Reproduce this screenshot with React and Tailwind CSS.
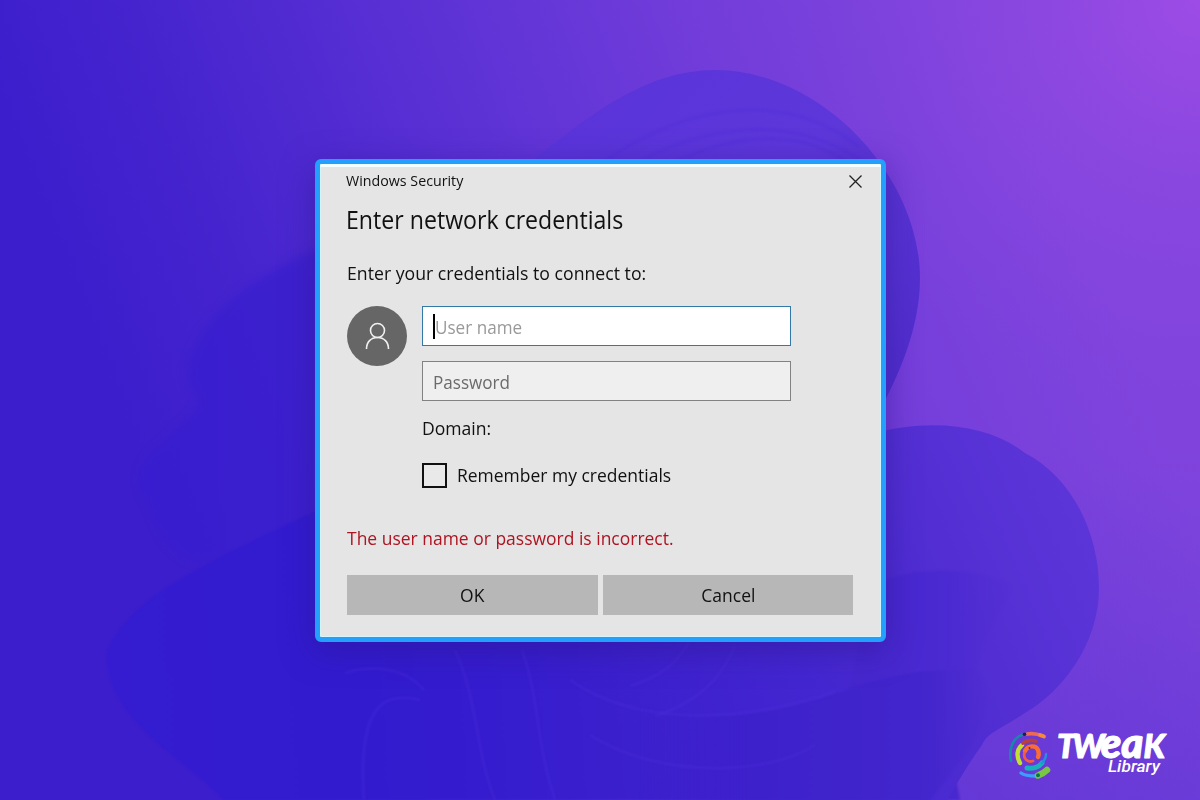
import { useState } from 'react';

const Wallpaper = () => (
  <svg className="absolute inset-0 h-full w-full" viewBox="0 0 1200 800" preserveAspectRatio="none" aria-hidden="true">
    <defs>
      <linearGradient id="base" x1="150" y1="500" x2="1050" y2="150" gradientUnits="userSpaceOnUse">
        <stop offset="0" stopColor="#3c1ecc" />
        <stop offset="0.17" stopColor="#4524ce" />
        <stop offset="0.5" stopColor="#6034d6" />
        <stop offset="0.72" stopColor="#733dda" />
        <stop offset="1" stopColor="#8044dd" />
      </linearGradient>
      <radialGradient id="glow" cx="1200" cy="0" r="420" gradientUnits="userSpaceOnUse">
        <stop offset="0" stopColor="#a14de7" stopOpacity="0.9" />
        <stop offset="1" stopColor="#8245dd" stopOpacity="0" />
      </radialGradient>
      <linearGradient id="dusk" x1="0" y1="450" x2="0" y2="800" gradientUnits="userSpaceOnUse">
        <stop offset="0" stopColor="#5a35d4" stopOpacity="0" />
        <stop offset="1" stopColor="#5a35d4" stopOpacity="0.5" />
      </linearGradient>
      <linearGradient id="bloomTop" x1="560" y1="80" x2="920" y2="400" gradientUnits="userSpaceOnUse">
        <stop offset="0" stopColor="#5934d9" />
        <stop offset="0.5" stopColor="#5e37d9" />
        <stop offset="1" stopColor="#4f2ccb" />
      </linearGradient>
      <linearGradient id="bloomLeft" x1="110" y1="600" x2="900" y2="560" gradientUnits="userSpaceOnUse">
        <stop offset="0" stopColor="#351cd0" />
        <stop offset="0.3" stopColor="#321bcf" />
        <stop offset="0.5" stopColor="#361dce" />
        <stop offset="0.75" stopColor="#3f22cd" />
        <stop offset="1" stopColor="#4828cf" />
      </linearGradient>
      <linearGradient id="bloomRight" x1="600" y1="750" x2="1090" y2="540" gradientUnits="userSpaceOnUse">
        <stop offset="0" stopColor="#3c20cf" stopOpacity="0" />
        <stop offset="0.4" stopColor="#4326d0" />
        <stop offset="0.75" stopColor="#532fd3" />
        <stop offset="1" stopColor="#5c35d8" />
      </linearGradient>
      <linearGradient id="foldUpper" x1="860" y1="0" x2="1030" y2="0" gradientUnits="userSpaceOnUse">
        <stop offset="0" stopColor="#4627ce" />
        <stop offset="0.5" stopColor="#4b2ad2" />
        <stop offset="1" stopColor="#552fd4" stopOpacity="0" />
      </linearGradient>
      <linearGradient id="foldLower" x1="640" y1="0" x2="1000" y2="0" gradientUnits="userSpaceOnUse">
        <stop offset="0" stopColor="#3c20cc" stopOpacity="0" />
        <stop offset="0.3" stopColor="#3d21cb" />
        <stop offset="0.8" stopColor="#4326cc" />
        <stop offset="1" stopColor="#4e2bd1" stopOpacity="0" />
      </linearGradient>
      <linearGradient id="petal" x1="140" y1="0" x2="340" y2="0" gradientUnits="userSpaceOnUse">
        <stop offset="0" stopColor="#361dd0" />
        <stop offset="1" stopColor="#3a20cd" />
      </linearGradient>
      <filter id="soft" colorInterpolationFilters="sRGB">
        <feGaussianBlur stdDeviation="1.2" />
      </filter>
      <filter id="softer" x="-20%" y="-20%" width="140%" height="140%" colorInterpolationFilters="sRGB">
        <feGaussianBlur stdDeviation="4" />
      </filter>
    </defs>

    <rect width="1200" height="800" fill="url(#base)" />
    <rect width="1200" height="800" fill="url(#glow)" />
    <rect x="900" y="450" width="300" height="350" fill="url(#dusk)" />

    <path d="M510 178C580 124 638 70 716 70C822 71 920 176 920 278C920 331 896 380 880 410L520 430Z" fill="url(#bloomTop)" />
    <g fill="none" stroke="#4f2fdb" strokeOpacity="0.45" filter="url(#soft)" strokeWidth="2.5">
      <path d="M604 162C690 101 786 91 858 146" />
      <path d="M642 160C710 125 790 114 860 160" />
      <path d="M670 164C738 132 800 128 850 164" />
    </g>

    <path d="M340 240C230 280 180 340 190 385C205 405 198 408 170 435C137 465 133 480 150 505C160 540 178 560 202 563L340 540Z" fill="url(#petal)" fillOpacity="0.75" filter="url(#softer)" />
    <path d="M340 500C210 560 128 596 107 652C104 720 185 758 223 800L960 800L900 500Z" fill="url(#bloomLeft)" filter="url(#soft)" />

    <path d="M870 434C930 418 988 424 1025 453C1073 478 1099 534 1099 588C1099 646 1060 693 1025 713C1000 730 988 732 982 745C968 764 957 784 947 800L560 800L600 620L870 620Z" fill="url(#bloomRight)" />
    <path d="M870 586C920 564 975 567 1012 586L985 640L975 672C940 662 890 672 850 690Z" fill="url(#foldUpper)" filter="url(#soft)" />
    <path d="M620 700C700 728 760 718 840 692C900 670 945 666 978 672C1000 700 980 740 930 800L600 800Z" fill="url(#foldLower)" filter="url(#soft)" />

    <g fill="none" stroke="#5535e0" strokeOpacity="0.26" filter="url(#soft)" strokeWidth="2.5">
      <path d="M345 673C375 664 405 668 424 690" />
      <path d="M364 800C358 710 380 690 420 700" />
      <path d="M455 650C478 700 475 750 495 800" />
      <path d="M522 650C540 700 535 740 555 800" />
      <path d="M570 680C635 725 735 725 835 692" />
      <path d="M590 735C660 780 770 775 815 745" />
      <path d="M690 640C675 668 655 678 630 686" />
      <path d="M735 645C720 685 690 705 655 716" />
    </g>
  </svg>
);

const UserGlyph = () => (
  <svg className="h-[30px] w-[26px]" viewBox="0 0 26 30" fill="none" stroke="#f1f1f1" strokeWidth="1.6">
    <circle cx="13.5" cy="9.5" r="7" />
    <path d="M2.5 28C2.5 21 7 16.5 13.5 16.5S24.5 21 24.5 28" />
  </svg>
);

const CloseGlyph = () => (
  <svg className="h-[13px] w-[13px]" viewBox="0 0 13 13" fill="none" stroke="#222" strokeWidth="1.3">
    <path d="M0.5 0.5L12.5 12.5M12.5 0.5L0.5 12.5" />
  </svg>
);

const Logo = () => (
  <svg className="absolute left-[1005px] top-[705px] h-[90px] w-[180px]" viewBox="0 -20 180 90">
    <g fill="none" strokeLinecap="round">
      <path d="M6 36C3 23 9 12 18 9.5" stroke="#1688a8" strokeWidth="2.6" />
      <path d="M22 9C28 8 33 9 38 11" stroke="#ee6a50" strokeWidth="3.8" />
      <path d="M35 10L39 11.5" stroke="#f58a3b" strokeWidth="3.8" />
      <circle cx="19.5" cy="9.3" r="1.8" fill="#172052" />
      <path d="M15 38C11 31 12 24 17 20" stroke="#c1e02f" strokeWidth="4.4" />
      <path d="M18 18C22 15 27 15 31 16" stroke="#b83f3c" strokeWidth="3.8" />
      <path d="M20 26C23 20 31 20 33 25C34 28 34 30 33 32" stroke="#fb6b32" strokeWidth="4.4" />
      <path d="M19.5 28C18 33 22 38 28 36" stroke="#f45a42" strokeWidth="2.8" />
      <circle cx="24.5" cy="23" r="1" fill="#7b2935" />
      <path d="M22 43C28 44 34 42 37 38" stroke="#18b1bc" strokeWidth="5" />
      <path d="M37 38C40 35 41 32 41 29" stroke="#248ee0" strokeWidth="2.4" />
      <path d="M16 48C20 51 25 51 31 51" stroke="#3e9cfa" strokeWidth="3.4" />
      <path d="M33 50.5C37 49 39 48 42 45" stroke="#79c843" strokeWidth="6.5" />
      <circle cx="33" cy="50.3" r="2" fill="#08764e" />
    </g>
    <text
      x="52"
      y="32.5"
      fontSize="33"
      fill="#fff"
      stroke="#fff"
      strokeWidth="1.1"
      strokeLinejoin="round"
      textLength="108"
      lengthAdjust="spacingAndGlyphs"
      className="font-['Lato'] font-black italic"
    >
      T<tspan dx="-3">W</tspan>
      <tspan fontSize="42" dx="-4">ea</tspan>
      <tspan>K</tspan>
    </text>
    <text x="103" y="47" fontSize="16.5" fill="#fff" textLength="52" lengthAdjust="spacingAndGlyphs" className="font-['Roboto'] font-medium italic">
      Library
    </text>
  </svg>
);

const CredentialsDialog = () => {
  const [remember, setRemember] = useState(false);

  return (
    <div className="relative flex h-[483px] w-[571px] flex-col rounded-md border-[5px] border-[#249ffb] bg-[#e5e5e5] pl-[27px] pr-[23px] text-[19px] text-[#111] shadow-[inset_0_3px_0_#f3ffff,inset_-1px_-1px_0_#d5f5fb,inset_1px_0_0_#d5f5fb,0_8px_32px_0_rgba(42,22,140,0.5)]">
      <div className="flex h-[34px] items-center justify-between">
        <span className="-mt-px -ml-px origin-left scale-x-[0.95] whitespace-nowrap text-[15px]">Windows Security</span>
        <button className="-mr-[9px] flex h-6 w-6 items-center justify-center" aria-label="Close">
          <CloseGlyph />
        </button>
      </div>
      <h1 className="-ml-px flex h-11 origin-left scale-x-[0.925] items-center whitespace-nowrap text-[25px]">
        Enter network credentials
      </h1>
      <p className="flex h-[62px] origin-left scale-x-[0.93] items-center whitespace-nowrap">
        Enter your credentials to connect to:
      </p>

      <div className="mt-0.5 flex gap-[15px]">
        <div className="flex h-[60px] w-[60px] shrink-0 items-center justify-center rounded-full bg-[#666]">
          <UserGlyph />
        </div>
        <div className="flex w-[369px] flex-col">
          <div className="flex h-10 items-center border-[1.5px] border-[#3279a8] bg-white pl-2.5">
            <span className="h-[25px] w-[1.5px] bg-black" />
            <span className="mt-[3px] origin-left scale-x-[0.9] whitespace-nowrap text-[#999]">User name</span>
          </div>
          <div className="mt-[15px] flex h-10 items-center border-[1.5px] border-[#828282] bg-[#efefef] pl-2.5">
            <span className="mt-[3px] origin-left scale-x-[0.9] whitespace-nowrap text-[#6b6b6b]">Password</span>
          </div>
          <span className="flex h-[54px] origin-left scale-x-[0.925] items-center">Domain:</span>
          <label className="mt-0.5 flex h-9 items-center gap-2.5 whitespace-nowrap">
            <input
              type="checkbox"
              checked={remember}
              onChange={() => setRemember(!remember)}
              className="h-[25px] w-[25px] shrink-0 appearance-none border-2 border-[#111] bg-[#e9e9e9]"
            />
            <span className="origin-left scale-x-[0.92]">Remember my credentials</span>
          </label>
        </div>
      </div>

      <p className="mt-[27px] flex h-9 origin-left scale-x-[0.92] items-center whitespace-nowrap text-[#ae1422]">
        The user name or password is incorrect.
      </p>
      <div className="mt-[19px] flex gap-[5px]">
        <button className="h-10 w-[251px] shrink-0 bg-[#b7b7b7]">
          <span className="inline-block scale-x-[0.92]">OK</span>
        </button>
        <button className="h-10 w-[250px] shrink-0 bg-[#b7b7b7]">
          <span className="inline-block scale-x-[0.92]">Cancel</span>
        </button>
      </div>
    </div>
  );
};

export default function App() {
  return (
    <div className="relative h-[800px] w-[1200px] overflow-hidden bg-[#3d1ecb] pl-[315px] pt-[159px] font-['Open_Sans','Noto_Sans',sans-serif]">
      <Wallpaper />
      <CredentialsDialog />
      <Logo />
    </div>
  );
}
